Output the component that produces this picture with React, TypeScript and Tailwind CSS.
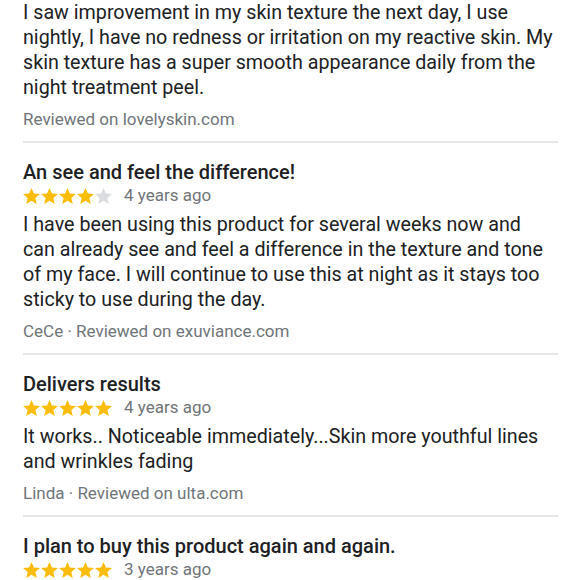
type Review = {
  title?: string;
  rating?: number;
  age?: string;
  body?: string;
  author?: string;
  site?: string;
};

const reviews: Review[] = [
  {
    body: "I saw improvement in my skin texture the next day, I use nightly, I have no redness or irritation on my reactive skin. My skin texture has a super smooth appearance daily from the night treatment peel.",
    site: "lovelyskin.com",
  },
  {
    title: "An see and feel the difference!",
    rating: 4,
    age: "4 years ago",
    body: "I have been using this product for several weeks now and can already see and feel a difference in the texture and tone of my face. I will continue to use this at night as it stays too sticky to use during the day.",
    author: "CeCe",
    site: "exuviance.com",
  },
  {
    title: "Delivers results",
    rating: 5,
    age: "4 years ago",
    body: "It works.. Noticeable immediately...Skin more youthful lines and wrinkles fading",
    author: "Linda",
    site: "ulta.com",
  },
  {
    title: "I plan to buy this product again and again.",
    rating: 5,
    age: "3 years ago",
  },
];

const Star = ({ filled }: { filled: boolean }) => (
  <svg width="17" height="16" viewBox="1.6 2.2 20.8 19.7" className={filled ? "fill-[#fbbc04]" : "fill-[#dadce0]"}>
    <path d="M12 2.2l2.95 6.9 7.45.62-5.66 4.9 1.7 7.3L12 18.05 5.56 21.92l1.7-7.3L1.6 9.72l7.45-.62z" />
  </svg>
);

const ReviewItem = ({ r, first }: { r: Review; first: boolean }) => (
  <div className={first ? "pb-[10px] border-b-2 border-[#e6e6e6]" : "pt-[17px] pb-[10px] border-b-2 border-[#e6e6e6]"}>
    {r.title && (
      <div className="text-[20px] leading-[24px] font-medium text-[#202124]">{r.title}</div>
    )}
    {r.rating !== undefined && (
      <div className="flex items-center h-[24px]">
        <div className="flex gap-[1px]">
          {[0, 1, 2, 3, 4].map((i) => (
            <Star key={i} filled={i < (r.rating ?? 0)} />
          ))}
        </div>
        <span className="ml-[12px] text-[17px] text-[#70757a]">{r.age}</span>
      </div>
    )}
    {r.body && (
      <p className={r.title ? "mt-[4px] pr-[3px] text-[19.7px] leading-[25px] text-[#202124]" : "pr-[3px] text-[19.7px] leading-[25px] text-[#202124]"}>
        {r.body}
      </p>
    )}
    {r.site && (
      <div className="mt-[7px] text-[17px] leading-[24px] text-[#70757a]">
        {r.author ? `${r.author} · ` : ""}Reviewed on {r.site}
      </div>
    )}
  </div>
);

export default function App() {
  return (
    <div className="w-[580px] h-[580px] overflow-hidden bg-white font-['Roboto',sans-serif]">
      <div className="pl-[23px] pr-[22px]">
        {reviews.map((r, i) => (
          <ReviewItem key={i} r={r} first={i === 0} />
        ))}
      </div>
    </div>
  );
}
